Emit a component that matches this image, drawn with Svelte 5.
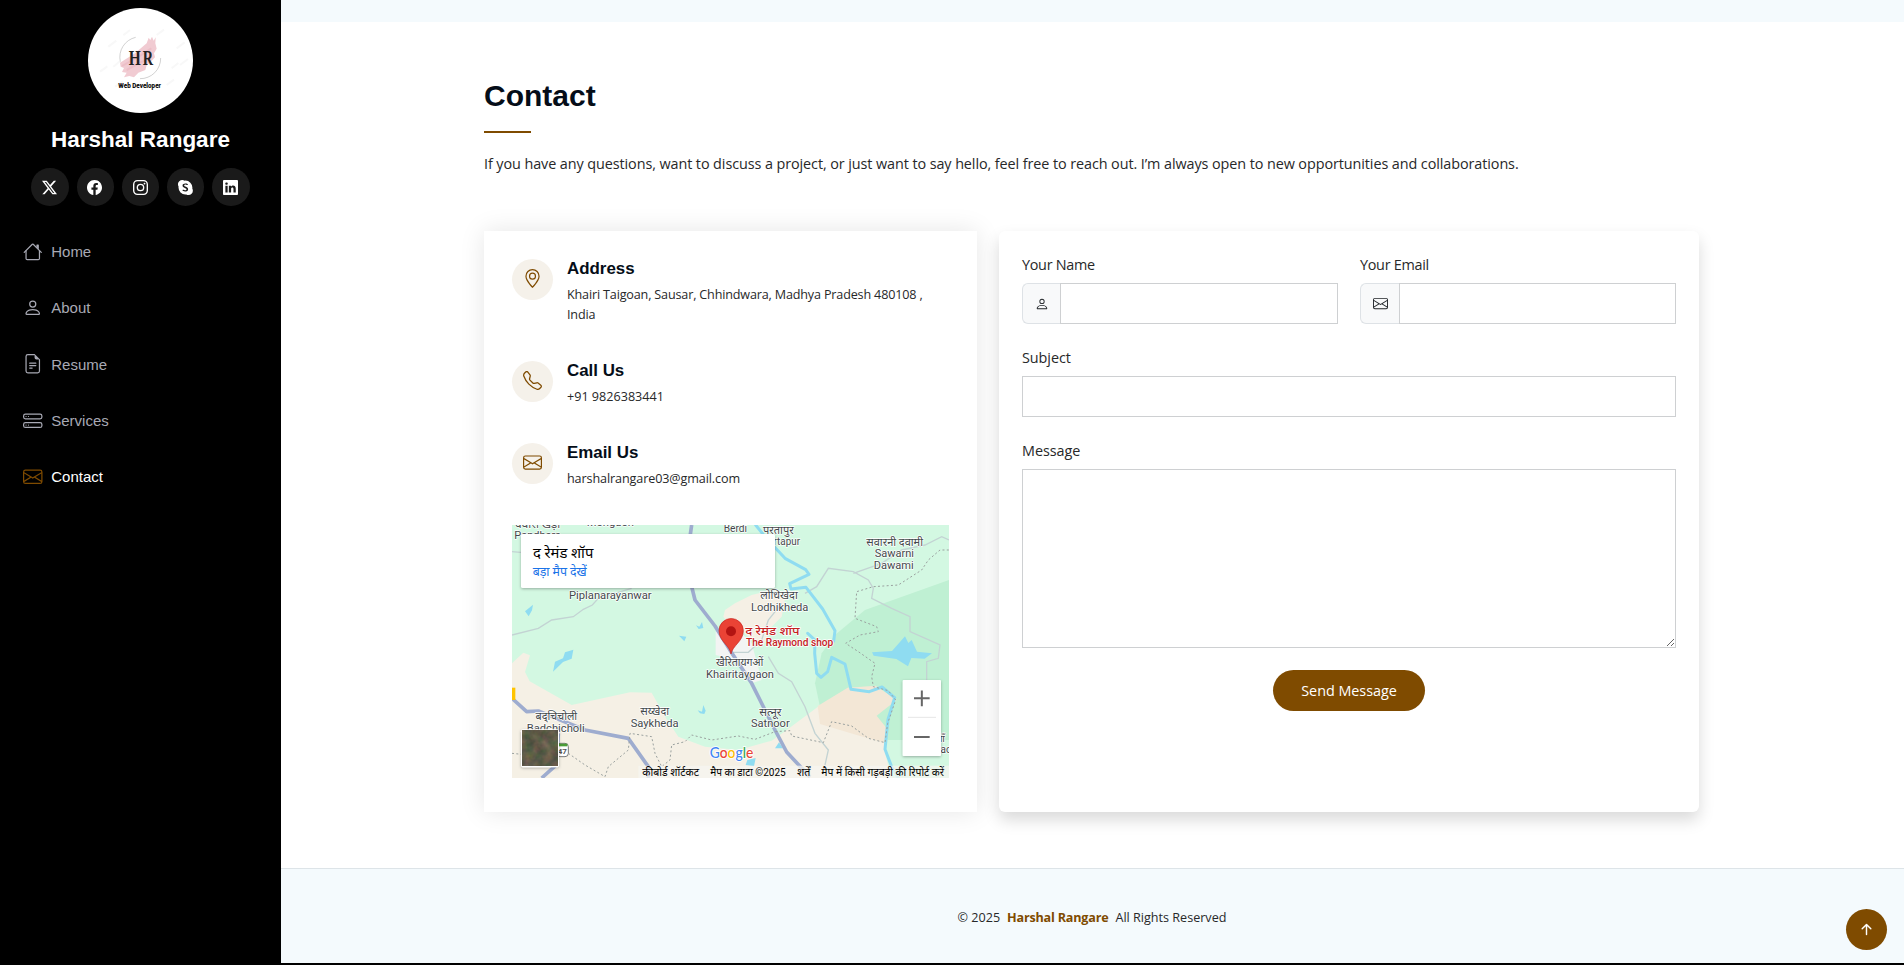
<script>
  const icons = {
    x: ['M12.6.75h2.454l-5.36 6.142L16 15.25h-4.937l-3.867-5.07-4.425 5.07H.316l5.733-6.57L0 .75h5.063l3.495 4.633L12.601.75Zm-.86 13.028h1.36L4.323 2.145H2.865z'],
    facebook: ['M16 8.049c0-4.446-3.582-8.05-8-8.05C3.58 0-.002 3.603-.002 8.05c0 4.017 2.926 7.347 6.75 7.951v-5.625h-2.03V8.05H6.75V6.275c0-2.017 1.195-3.131 3.022-3.131.876 0 1.791.157 1.791.157v1.98h-1.009c-.993 0-1.303.621-1.303 1.258v1.51h2.218l-.354 2.326H9.25V16c3.824-.604 6.75-3.934 6.75-7.951'],
    instagram: ['M4.7 0h6.6A4.7 4.7 0 0 1 16 4.7v6.6a4.7 4.7 0 0 1-4.7 4.7H4.7A4.7 4.7 0 0 1 0 11.300V4.7A4.7 4.7 0 0 1 4.7 0m.1 1.450A3.350 3.350 0 0 0 1.450 4.800v6.400a3.350 3.350 0 0 0 3.350 3.350h6.400a3.350 3.350 0 0 0 3.350-3.350V4.800a3.350 3.350 0 0 0-3.350-3.350zM8 3.890a4.110 4.110 0 1 1 0 8.220 4.110 4.110 0 0 1 0-8.220m0 1.440a2.670 2.670 0 1 0 0 5.340 2.670 2.670 0 0 0 0-5.340m4.270-2.530a.96.96 0 1 1 0 1.920.96.96 0 0 1 0-1.920'],
    skype: ['M4.671 0c.88 0 1.733.247 2.468.702a7.42 7.42 0 0 1 6.02 2.118 7.37 7.37 0 0 1 2.167 5.215q0 .517-.072 1.026a4.66 4.66 0 0 1 .6 2.281 4.64 4.64 0 0 1-1.37 3.294A4.67 4.67 0 0 1 11.18 16c-.84 0-1.658-.226-2.37-.644a7.42 7.42 0 0 1-6.114-2.107A7.37 7.37 0 0 1 .529 8.035q0-.545.08-1.081a4.644 4.644 0 0 1 .76-5.59A4.68 4.68 0 0 1 4.67 0zm.447 7.01c.18.309.43.572.729.769a7 7 0 0 0 1.257.653q.737.308 1.145.523c.229.112.437.264.615.448.135.142.21.331.21.528a.87.87 0 0 1-.335.723c-.291.196-.64.289-.99.264a2.6 2.6 0 0 1-1.048-.206 11 11 0 0 1-.532-.253 1.3 1.3 0 0 0-.587-.15.72.72 0 0 0-.501.176.63.63 0 0 0-.195.491.8.8 0 0 0 .148.482 1.2 1.2 0 0 0 .456.354 5.1 5.1 0 0 0 2.212.419 4.6 4.6 0 0 0 1.624-.265 2.3 2.3 0 0 0 1.08-.801c.267-.39.402-.855.386-1.327a2.1 2.1 0 0 0-.279-1.101 2.5 2.5 0 0 0-.772-.792A7 7 0 0 0 8.486 7.3a1 1 0 0 0-.145-.058 18 18 0 0 1-1.013-.447 1.8 1.8 0 0 1-.54-.387.73.73 0 0 1-.2-.508.8.8 0 0 1 .385-.723 1.76 1.76 0 0 1 .968-.247c.26-.003.52.03.772.096q.412.119.802.293c.105.049.22.075.336.076a.6.6 0 0 0 .453-.19.7.7 0 0 0 .18-.496.72.72 0 0 0-.17-.476 1.4 1.4 0 0 0-.556-.354 3.7 3.7 0 0 0-.708-.183 6 6 0 0 0-1.022-.078 4.5 4.5 0 0 0-1.536.258 2.7 2.7 0 0 0-1.174.784 1.9 1.9 0 0 0-.45 1.287c-.01.37.076.736.25 1.063'],
    linkedin: ['M0 1.146C0 .513.526 0 1.175 0h13.65C15.474 0 16 .513 16 1.146v13.708c0 .633-.526 1.146-1.175 1.146H1.175C.526 16 0 15.487 0 14.854zm4.943 12.248V6.169H2.542v7.225zm-1.2-8.212c.837 0 1.358-.554 1.358-1.248-.015-.709-.52-1.248-1.342-1.248S2.4 3.226 2.4 3.934c0 .694.521 1.248 1.327 1.248zm4.908 8.212V9.359c0-.216.016-.432.08-.586.173-.431.568-.878 1.232-.878.869 0 1.216.662 1.216 1.634v3.865h2.401V9.25c0-2.22-1.184-3.252-2.764-3.252-1.274 0-1.845.7-2.165 1.193v.025h-.016l.016-.025V6.169h-2.4c.03.678 0 7.225 0 7.225z'],
    house: ['M2 13.5V7h1v6.5a.5.5 0 0 0 .5.5h9a.5.5 0 0 0 .5-.5V7h1v6.5a1.5 1.5 0 0 1-1.5 1.5h-9A1.5 1.5 0 0 1 2 13.5zm11-11V6l-2-2V2.5a.5.5 0 0 1 .5-.5h1a.5.5 0 0 1 .5.5z', 'M7.293 1.5a1 1 0 0 1 1.414 0l6.647 6.646a.5.5 0 0 1-.708.708L8 2.207 1.354 8.854a.5.5 0 1 1-.708-.708L7.293 1.5z'],
    person: ['M8 8a3 3 0 1 0 0-6 3 3 0 0 0 0 6m2-3a2 2 0 1 1-4 0 2 2 0 0 1 4 0m4 8c0 1-1 1-1 1H3s-1 0-1-1 1-4 6-4 6 3 6 4m-1-.004c-.001-.246-.154-.986-.832-1.664C11.516 10.68 10.289 10 8 10s-3.516.68-4.168 1.332c-.678.678-.83 1.418-.832 1.664z'],
    file: ['M5.5 7a.5.5 0 0 0 0 1h5a.5.5 0 0 0 0-1zM5 9.5a.5.5 0 0 1 .5-.5h5a.5.5 0 0 1 0 1h-5a.5.5 0 0 1-.5-.5m0 2a.5.5 0 0 1 .5-.5h2a.5.5 0 0 1 0 1h-2a.5.5 0 0 1-.5-.5', 'M9.500 0H4a2 2 0 0 0-2 2v12a2 2 0 0 0 2 2h8a2 2 0 0 0 2-2V4.5zm0 1v2A1.5 1.5 0 0 0 11 4.5h2V14a1 1 0 0 1-1 1H4a1 1 0 0 1-1-1V2a1 1 0 0 1 1-1z'],
    stack: ['M14 10a1 1 0 0 1 1 1v1a1 1 0 0 1-1 1H2a1 1 0 0 1-1-1v-1a1 1 0 0 1 1-1zM2 9a2 2 0 0 0-2 2v1a2 2 0 0 0 2 2h12a2 2 0 0 0 2-2v-1a2 2 0 0 0-2-2z', 'M5 11.5a.5.5 0 1 1-1 0 .5.5 0 0 1 1 0m-2 0a.5.5 0 1 1-1 0 .5.5 0 0 1 1 0M14 3a1 1 0 0 1 1 1v1a1 1 0 0 1-1 1H2a1 1 0 0 1-1-1V4a1 1 0 0 1 1-1zM2 2a2 2 0 0 0-2 2v1a2 2 0 0 0 2 2h12a2 2 0 0 0 2-2V4a2 2 0 0 0-2-2z', 'M5 4.5a.5.5 0 1 1-1 0 .5.5 0 0 1 1 0m-2 0a.5.5 0 1 1-1 0 .5.5 0 0 1 1 0'],
    envelope: ['M0 4a2 2 0 0 1 2-2h12a2 2 0 0 1 2 2v8a2 2 0 0 1-2 2H2a2 2 0 0 1-2-2zm2-1a1 1 0 0 0-1 1v.217l7 4.2 7-4.2V4a1 1 0 0 0-1-1zm13 2.383-4.708 2.825L15 11.105zm-.034 6.876-5.64-3.471L8 9.583l-1.326-.795-5.64 3.47A1 1 0 0 0 2 13h12a1 1 0 0 0 .966-.741M1 11.105l4.708-2.897L1 5.383z'],
    geo: ['M12.166 8.94c-.524 1.062-1.234 2.12-1.96 3.07A32 32 0 0 1 8 14.58a32 32 0 0 1-2.206-2.57c-.726-.95-1.436-2.008-1.96-3.07C3.304 7.867 3 6.862 3 6a5 5 0 0 1 10 0c0 .862-.305 1.867-.834 2.94M8 16s6-5.686 6-10A6 6 0 0 0 2 6c0 4.314 6 10 6 10', 'M8 8a2 2 0 1 1 0-4 2 2 0 0 1 0 4m0 1a3 3 0 1 0 0-6 3 3 0 0 0 0 6'],
    phone: ['M3.654 1.328a.678.678 0 0 0-1.015-.063L1.605 2.3c-.483.484-.661 1.169-.45 1.77a17.6 17.6 0 0 0 4.168 6.608 17.6 17.6 0 0 0 6.608 4.168c.601.211 1.286.033 1.77-.45l1.034-1.034a.678.678 0 0 0-.063-1.015l-2.307-1.794a.68.68 0 0 0-.58-.122l-2.19.547a1.75 1.75 0 0 1-1.657-.459L5.482 8.062a1.75 1.75 0 0 1-.46-1.657l.548-2.19a.68.68 0 0 0-.122-.58zM1.884.511a1.745 1.745 0 0 1 2.612.163L6.29 2.98c.329.423.445.974.315 1.494l-.547 2.19a.68.68 0 0 0 .178.643l2.457 2.457a.68.68 0 0 0 .644.178l2.189-.547a1.75 1.75 0 0 1 1.494.315l2.306 1.794c.829.645.905 1.87.163 2.611l-1.034 1.034c-.74.74-1.846 1.065-2.877.702a18.6 18.6 0 0 1-7.01-4.42 18.6 18.6 0 0 1-4.42-7.009c-.362-1.03-.037-2.137.703-2.877z'],
    up: ['M8 12a.5.5 0 0 0 .5-.5V5.707l2.146 2.147a.5.5 0 0 0 .708-.708l-3-3a.5.5 0 0 0-.708 0l-3 3a.5.5 0 1 0 .708.708L7.5 5.707V11.5a.5.5 0 0 0 .5.5']
  };
  const socials = ['x', 'facebook', 'instagram', 'skype', 'linkedin'];
  const nav = [
    ['house', 'Home'],
    ['person', 'About'],
    ['file', 'Resume'],
    ['stack', 'Services'],
    ['envelope', 'Contact']
  ];
  // text, centre x, baseline y, width
  const mapLabels = [
    ['वघारी खेड़ी', 98, 25, 135], ['Pandhara', 98, 58, 140], ['Mongaon', 316, 18, 142],
    ['Berdi', 691, 35, 70], ['परतापुर', 820, 42, 92], ['Partapur', 828, 76, 114],
    ['सवारनी दवामी', 1169, 77, 170], ['Sawarni', 1168, 112, 118], ['Dawami', 1166, 146, 120],
    ['Piplanarayanwar', 316, 237, 248],
    ['लोधिखेदा', 822, 238, 113], ['Lodhikheda', 824, 272, 172],
    ['खैरितायगओं', 704, 438, 142], ['Khairitaygaon', 705, 473, 204],
    ['बद्चिचोली', 154, 600, 125], ['Badchicholi', 152, 635, 174],
    ['सय्खेदा', 449, 586, 87], ['Saykheda', 449, 621, 144],
    ['सत्नूर', 796, 588, 67], ['Satnoor', 796, 622, 116]
  ];
</script>

{#snippet icon(name, size)}
  <svg class="icon" viewBox="0 0 16 16" width={size} height={size} fill="currentColor" fill-rule={name === 'instagram' ? 'evenodd' : 'nonzero'}>
    {#each icons[name] as d}<path {d} />{/each}
  </svg>
{/snippet}

<div class="page">
  <aside>
    <svg class="avatar" viewBox="264 24 315 315" width="105" height="105">
      <circle cx="421.500" cy="181.500" r="157.500" fill="#fff" />
      <path d="M370 106l20-16M470 105l22-16M325 140l24-18M530 145l24-18M300 215l22-16M345 260l24-16M540 195l24-18M500 255l22-16M340 200l20-16M515 205l20-16" stroke="#f8f8f8" stroke-width="6" />
      <path d="M360 188L405 160L440 130L446 113L451 120L456 110L461 122L467 112L466 130L470 146L462 160L465 172L452 185L440 196L436 210L415 218L402 232L388 228L372 232L380 218L366 216L372 204L362 200z" fill="#f1cbd2" />
      <path d="M366 198l50-28 38-25M380 210l50-27 22-14" fill="none" stroke="#e9b5c0" stroke-width="6" opacity=".6" />
      <path d="M361 185a61 61 0 0 1 46-73M482 174a61 61 0 0 1-62 62" fill="none" stroke="#bbb" stroke-width="2" />
      <g font-family="Liberation Serif, serif" font-size="62" font-weight="700" fill="#222">
        <text x="386" y="195" textLength="36" lengthAdjust="spacingAndGlyphs">H</text>
        <text x="428" y="195" textLength="31" lengthAdjust="spacingAndGlyphs">R</text>
      </g>
      <text x="355" y="265" textLength="128" lengthAdjust="spacingAndGlyphs" font-family="Roboto, sans-serif" font-weight="900" font-size="20" fill="#111">Web Developer</text>
    </svg>
    <h1>Harshal Rangare</h1>
    <div class="socials">
      {#each socials as s}<a href="#top" aria-label={s}>{@render icon(s, 15)}</a>{/each}
    </div>
    <nav>
      {#each nav as [ic, label]}
        <a href="#top" class:active={label === 'Contact'}>{@render icon(ic, 19.5)}<span>{label}</span></a>
      {/each}
    </nav>
  </aside>

  <main>
    <div class="band"></div>
    <section>
      <h2>Contact</h2>
      <div class="rule"></div>
      <p class="lead">If you have any questions, want to discuss a project, or just want to say hello, feel free to reach out. I’m always open to new opportunities and collaborations.</p>

      <div class="cards">
        <div class="info">
          <div class="item">
            <div class="dot">{@render icon('geo', 19)}</div>
            <div><h3>Address</h3><p class="address">Khairi Taigoan, Sausar, Chhindwara, Madhya Pradesh 480108 ,<br />India</p></div>
          </div>
          <div class="item">
            <div class="dot">{@render icon('phone', 19)}</div>
            <div><h3>Call Us</h3><p>+91 9826383441</p></div>
          </div>
          <div class="item">
            <div class="dot">{@render icon('envelope', 19)}</div>
            <div><h3>Email Us</h3><p class="mail">harshalrangare03@gmail.com</p></div>
          </div>

          <svg class="map" viewBox="21 15 1311 759" width="437" height="253">
            <defs>
              <filter id="shade" x="-10%" y="-10%" width="120%" height="125%"><feDropShadow dx="0" dy="3" stdDeviation="4" flood-opacity=".3" /></filter>
              <filter id="ground" x="0" y="0" width="100%" height="100%" color-interpolation-filters="sRGB">
                <feTurbulence type="fractalNoise" baseFrequency=".035" numOctaves="3" seed="4" />
                <feColorMatrix values=".3 0 0 0 .22  .1 .15 0 0 .23  .1 0 .1 0 .18  0 0 0 0 1" />
              </filter>
            </defs>
            <rect x="21" y="15" width="1311" height="759" fill="#d3f8e2" />
            <path d="M21 430L55 398L75 406L60 456L74 484L200 555L375 517L440 518L480 590L520 650L600 680L700 690L800 662L845 630L945 556L1150 660L1140 700L1160 774H21z" fill="#f5f0e5" />
            <path d="M660 270L690 250L740 225L800 210L840 235L830 290L790 330L780 370L740 360L710 330L670 310L655 290z" fill="#f5f0e5" />
            <path d="M632 335L690 320L740 370L770 480L740 490L690 420L632 405z" fill="#f3f4f3" />
            <path d="M1332 180L1080 270L990 345L950 400L930 490L945 560L1150 660H1332z" fill="#bff0d3" />
            <path d="M1135 660L1165 774H1332V660z" fill="#d3f8e2" />
            <path d="M938 558L1028 503L1112 497L1175 540L1115 587L1147 627L1137 668L1055 645L945 612z" fill="#f3e7d6" />
            <g fill="none" stroke="#c3d3d3" stroke-width="4">
              <path d="M21 95L80 100M21 345L100 325L140 300L205 290L235 268L262 255L280 235L380 205" />
              <path d="M900 220L935 200L970 145L1045 155L1090 180L1105 205L1100 235L1160 265L1215 290V335L1305 375L1300 415L1265 425V500" />
              <path d="M1045 160L1130 130L1190 90L1260 75L1310 50L1332 60M680 397H730L770 360L790 300L830 250M790 410L820 460L860 485L900 560L930 640L970 690L960 735" />
            </g>
            <g fill="none" stroke="#8fdcf1" stroke-width="9" stroke-linejoin="round" stroke-linecap="round">
              <path d="M752 15L780 50L840 115L902 149L912 163L854 191L858 207L903 202L953 267L990 332L986 364" />
              <path d="M908 340L930 360L929 400L935 460L948 472L968 455L980 412L1020 432L1038 508L1093 515L1131 501L1169 533L1149 598L1140 688L1160 740L1180 774" />
            </g>
            <path fill="#8fdcf1" d="M60 274l24-20-3 17-10 18zM144 455l6-30 24-10 6-18 25-8-5 27-26 10zM573 316l10 4 8-14 4 18-14 3zM522 347l22 3-6 14zM578 571l13 4 4-20 7 17-4 10-13-2zM1101 397l60-4 39-44 10 20 10-9 16 35 45 5-22 16-40-2-10 25-35-22-68-10zM810 685l12-18 12 18zM722 735l5-15 25-6-5 25z" />
            <g fill="none" stroke="#9eaccf" stroke-width="11" stroke-linejoin="round">
              <path d="M560 15L555 50V180L570 240L630 318L680 398L740 490L810 630L845 696L915 771" />
              <path d="M21 535L65 575L100 573L240 630L370 655L430 740V774M110 774L155 734L160 640" />
            </g>
            <g fill="none" stroke="#9aa19f" stroke-width="3" stroke-dasharray="6 7">
              <path d="M21 700L60 704M190 700L240 735L300 770L310 740L370 690L375 640L440 650L450 700L470 740L495 720L500 675L540 665L560 645L620 660L700 648L750 658L810 635L855 632L860 648L955 668L980 605L1040 618L1090 655L1140 668L1148 610L1172 540L1150 512L1105 500L1100 470L1110 430L1060 395L1022 370L1065 345L1120 335L1115 320L1050 295L1055 215L1105 200L1180 195L1250 150L1270 120L1305 90H1332" />
            </g>
            <path d="M21 503h10v37H21z" fill="#ffc400" />
            <rect x="155" y="670" width="35" height="40" rx="10" fill="#fff" stroke="#777" stroke-width="3" />
            <path d="M160 671h27v8h-27z" fill="#4a9c36" />
            <text x="172" y="701" text-anchor="middle" font-size="24" font-weight="700" fill="#555">47</text>
            <g class="places">
              {#each mapLabels as [t, x, y, w]}
                <text {x} {y} text-anchor="middle" textLength={w} lengthAdjust="spacingAndGlyphs">{t}</text>
              {/each}
              <text x="1295" y="666" font-size="30">गाँ</text>
              <text x="1290" y="700" font-size="30">gao</text>
            </g>
            <g class="poi">
              <text x="721" y="345" textLength="163" lengthAdjust="spacingAndGlyphs" font-size="35" font-weight="500">द रेमंड शॉप</text>
              <text x="723" y="378" textLength="262" lengthAdjust="spacingAndGlyphs" font-size="30" font-weight="500">The Raymond shop</text>
            </g>
            <path d="M678 402c-3-25-36-38-36-70a36 36 0 0 1 73 0c0 32-33 45-37 70z" fill="#ea4335" stroke="#c5221f" stroke-width="2" />
            <circle cx="678" cy="334" r="15" fill="#b31412" />
            <rect x="400" y="737" width="932" height="37" fill="#f5f5f0" opacity=".75" />
            <g font-size="31" fill="#000">
              <text x="412" y="768" textLength="170" lengthAdjust="spacingAndGlyphs">कीबोर्ड शॉर्टकट</text>
              <text x="616" y="768" textLength="226" lengthAdjust="spacingAndGlyphs">मैप का डाटा ©2025</text>
              <text x="876" y="768" textLength="40" lengthAdjust="spacingAndGlyphs">शर्तें</text>
              <text x="949" y="768" textLength="368" lengthAdjust="spacingAndGlyphs">मैप में किसी गड़बड़ी की रिपोर्ट करें</text>
            </g>
            <text class="google" x="614" y="713" textLength="131" lengthAdjust="spacingAndGlyphs"><tspan fill="#4285f4">G</tspan><tspan fill="#ea4335">o</tspan><tspan fill="#fbbc04">o</tspan><tspan fill="#4285f4">g</tspan><tspan fill="#34a853">l</tspan><tspan fill="#ea4335">e</tspan></text>
            <rect x="48" y="42" width="762" height="162" rx="5" fill="#fff" filter="url(#shade)" />
            <text x="84" y="113" textLength="181" lengthAdjust="spacingAndGlyphs" font-size="42" fill="#000">द रेमंड शॉप</text>
            <text x="83" y="167" textLength="162" lengthAdjust="spacingAndGlyphs" font-size="36" fill="#1a73e8">बड़ा मैप देखें</text>
            <rect x="1193" y="480" width="115" height="228" rx="3" fill="#fff" filter="url(#shade)" />
            <path d="M1209 592h84" stroke="#e6e6e6" stroke-width="3" />
            <path d="M1227 535h47M1250.500 511.500v47M1227 651h47" stroke="#666" stroke-width="6" />
            <rect x="48" y="628" width="114" height="114" rx="6" fill="#fff" filter="url(#shade)" />
            <rect x="52" y="632" width="106" height="106" filter="url(#ground)" />
          </svg>
        </div>

        <form onsubmit={(e) => e.preventDefault()}>
          <div class="row">
            <label><span class="cap tight">Your Name</span>
              <span class="group"><span class="addon">{@render icon('person', 14)}</span><input type="text" /></span></label>
            <label><span class="cap tight">Your Email</span>
              <span class="group"><span class="addon wide">{@render icon('envelope', 15)}</span><input type="text" /></span></label>
          </div>
          <label><span class="cap">Subject</span><input class="full" type="text" /></label>
          <label><span class="cap">Message</span><textarea></textarea></label>
          <button>Send Message</button>
        </form>
      </div>
    </section>
    <footer>
      <span>© 2025</span><strong>Harshal Rangare</strong><span>All Rights Reserved</span>
    </footer>
    <a class="totop" href="#top" aria-label="Back to top">{@render icon('up', 23)}</a>
  </main>
</div>

<style>
  :global(body) { background: #000; overflow: hidden; }
  * { box-sizing: border-box; }
  .page { display: grid; grid-template-columns: 281px 1fr; width: 1904px; height: 963px; background: #fff; color: #272829; font-family: "Open Sans", sans-serif; }
  h1, h2, h3, p { margin: 0; }
  a { text-decoration: none; color: inherit; }
  .icon { display: block; flex: none; }
  aside { background: #000; height: 963px; display: flex; flex-direction: column; align-items: center; padding-top: 8px; font-family: "Liberation Sans", Arial, sans-serif; }
  .avatar { display: block; }
  h1 { margin-top: 13px; height: 28px; line-height: 27px; font-size: 22.5px; color: #fff; }
  .socials { display: flex; gap: 7.700px; margin-top: 14px; }
  .socials a { width: 37.500px; height: 38px; border-radius: 50%; background: #1a1a1a; color: #fff; display: grid; place-items: center; padding-right: 1px; }
  nav { align-self: stretch; margin-top: 17.600px; padding-left: 23px; }
  nav a { display: flex; align-items: center; gap: 9px; height: 56.200px; font-size: 15px; color: #a8a9b4; }
  nav a.active { color: #fff; }
  nav a.active .icon { color: #7f4b00; }
  nav span { margin-left: -.3px; }
  main { position: relative; display: flex; flex-direction: column; height: 963px; }
  .band { height: 22px; background: #f4fafd; flex: none; }
  section { width: 1215px; margin-left: 203px; height: 846px; }
  h2 { padding-top: 56px; height: 92px; font: 700 30px/36px "Liberation Sans", Arial, sans-serif; color: #050d18; }
  .rule { margin-top: 17px; width: 47px; height: 2px; background: #7f4b00; }
  .lead { margin-top: 20px; height: 22px; line-height: 22px; font-size: 14.400px; letter-spacing: -.086px; white-space: nowrap; }
  .cards { display: grid; grid-template-columns: 493px 700px; gap: 22px; margin-top: 56px; height: 581px; }
  .info { padding: 28px; box-shadow: 0 0 24px rgba(0, 0, 0, .1); background: #fff; }
  .item { display: flex; gap: 14px; margin-bottom: 36px; }
  .dot { width: 41px; height: 41px; border-radius: 50%; background: #f5f1ea; color: #7f4b00; display: grid; place-items: center; padding-bottom: 2px; }
  h3 { font: 700 16.900px/19px "Liberation Sans", Arial, sans-serif; color: #050d18; }
  .item p { font-size: 12.600px; line-height: 20px; margin: 7px 0 0; white-space: nowrap; }
  .item .address { letter-spacing: -.165px; }
  .item .mail { letter-spacing: -.11px; }
  .map { display: block; font-family: Roboto, "Noto Sans", sans-serif; }
  .places { font-size: 33px; fill: #44494b; paint-order: stroke; stroke: #fff; stroke-width: 4px; stroke-linejoin: round; }
  .poi { fill: #c5221f; paint-order: stroke; stroke: #fff; stroke-width: 4px; }
  .google { font: 500 44px Lato, sans-serif; paint-order: stroke; stroke: #fff; stroke-width: 5px; }
  form { padding: 22px 23px; border-radius: 6px; background: #fff; box-shadow: 0 8px 16px rgba(0, 0, 0, .15); display: flex; flex-direction: column; }
  .row { display: flex; gap: 22px; }
  .row label { flex: 1; }
  label { display: block; margin-bottom: 22px; }
  .cap { display: block; height: 30px; line-height: 23px; font-size: 14.400px; letter-spacing: -.06px; }
  .tight { letter-spacing: -.29px; }
  .group { display: flex; height: 41px; }
  .addon { width: 38px; display: grid; place-items: center; background: #f8f9fa; border: 1px solid #dee2e6; border-right: 0; border-radius: 6px 0 0 6px; color: #212529; }
  .addon.wide { width: 39px; }
  input, textarea { display: block; min-width: 0; flex: 1; height: 41px; border: 1px solid #ced0d2; background: #fff; outline: 0; padding: 0; border-radius: 0; }
  .full, textarea { width: 100%; }
  textarea { height: 179px; }
  button { align-self: center; width: 152px; height: 41px; border: 0; border-radius: 21px; background: #7f4b00; color: #fff; font: 14.400px "Open Sans", sans-serif; letter-spacing: -.04px; padding: 0; }
  footer { flex: 1; border-top: 1px solid #dde4e8; background: #f4fafd; display: flex; justify-content: center; padding: 38px 1px 0 0; gap: 7px; font-size: 12.600px; line-height: 22px; }
  strong { color: #7f4b00; letter-spacing: -.2px; }
  .totop { position: absolute; right: 17px; bottom: 13px; width: 41px; height: 41px; border-radius: 50%; background: #7f4b00; color: #fff; display: grid; place-items: center; }
</style>
